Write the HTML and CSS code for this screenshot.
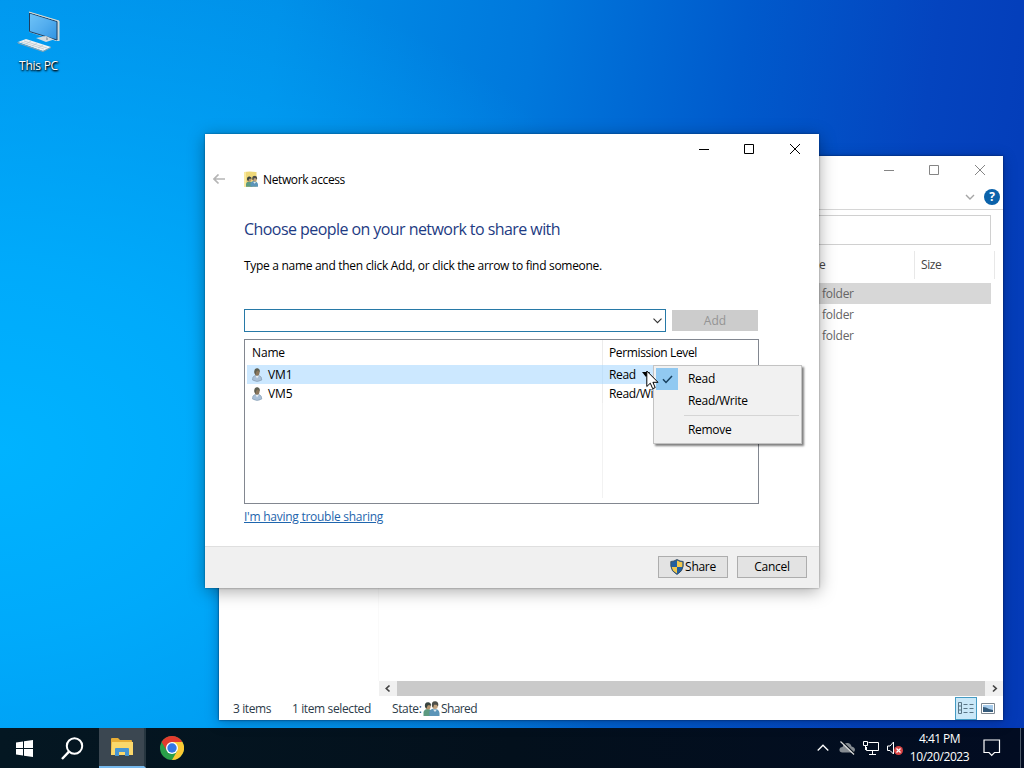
FILE: index.html
```html
<!DOCTYPE html>
<html lang="en">
<head>
<meta charset="utf-8">
<title>Network access</title>
<link rel="stylesheet" href="styles.css">
</head>
<body>
<svg width="0" height="0" class="defs">
  <symbol id="people" viewBox="0 0 16 16">
    <path d="M0 15V11Q1 8 4 8Q8 8 8.500 12V15Z" fill="#5c9a80"/>
    <path d="M6 15V10Q8 7 11 7.500Q15.500 8 16 12V15Z" fill="#5b94b8"/>
    <ellipse cx="4.500" cy="5.200" rx="2.700" ry="3.300" fill="#b5946f"/>
    <path d="M1.500 6Q.6 1 5 1.300Q8 2 7.300 5L5.500 4L4 4.700L3 7.500Z" fill="#384440"/>
    <ellipse cx="11.500" cy="4.500" rx="2.900" ry="3.500" fill="#c2a37e"/>
    <path d="M8.500 5.500Q7.500 0 12 .3Q15.800 1 14.500 5.500L13 3.800L10.500 3.800L9.800 6.500Z" fill="#4c4e48"/>
    <path d="M9.500 8.500L11.500 11L13.500 8.500" fill="#d9e7ee"/>
  </symbol>
  <symbol id="person" viewBox="0 0 12 14">
    <path d="M1.500 12Q1 8.500 4 7.500H8Q11 8.500 10.800 12Q6 15 1.500 12Z" fill="#a9c0d8" stroke="#8299ae" stroke-width=".6"/>
    <path d="M4.500 7.500L6 10.500L8 7.500Z" fill="#e7eff5"/>
    <ellipse cx="6" cy="4.200" rx="2.500" ry="3.500" fill="#8a765c"/>
    <path d="M3.300 4Q3 .2 6.500 .3Q9.300 .6 8.700 4.500L7.300 2.500Q5 2 4.800 6.500Q3.500 6 3.300 4Z" fill="#5e6053"/>
  </symbol>
</svg>
<div class="desktop">
  <div class="shortcut">
    <svg width="44" height="44" viewBox="0 0 44 44">
      <defs><linearGradient id="scr" x1="0" y1="0" x2="1" y2="1"><stop offset="0" stop-color="#70c4f8"/><stop offset=".5" stop-color="#54aeef"/><stop offset="1" stop-color="#2f93e2"/></linearGradient></defs>
      <path d="M12 2L42 11V31L39 31L12 22Z" fill="#bcd8e8"/>
      <path d="M12.500 3L40 11.500V30L12.500 21.500Z" fill="url(#scr)" stroke="#1c3f62"/>
      <path d="M12 2L42 11V31" fill="none" stroke="#e0dccf"/>
      <path d="M19 28L29 26L37 29.500L29 32Z" fill="#d5dce0"/><path d="M29 27V30H31V28" fill="#a2adb5"/>
      <path d="M1 32L9 29L34 37L26 41Z" fill="#eef2f3"/><path d="M1 32V33L26 41.500L34 37.500" fill="none" stroke="#8ba3b0"/>
      <path d="M4 32L27 39M7 31L30 38M9 34L14 31M15 36L20 33M21 38L26 35" stroke="#b7c4cc" stroke-width=".7"/>
    </svg>
    <span>This PC</span>
  </div>

  <section class="window explorer">
    <div class="explorer-title">
      <svg width="102" height="12" viewBox="0 0 102 12" fill="none" stroke="#858585"><path d="M0 6.500H10M45.500 1.500H54.500V10.500H45.500ZM91 1L101 11M101 1L91 11"/></svg>
    </div>
    <div class="ribbon">
      <svg width="10" height="6" viewBox="0 0 10 6" fill="none" stroke="#a5a5a5" stroke-width="1.400"><path d="M1 1L5 5L9 1"/></svg>
      <b class="help">?</b>
    </div>
    <div class="address"><div class="address-box"></div></div>
    <div class="columns"><span class="col-type">e</span><span class="col-size">Size</span></div>
    <div class="browser">
      <div class="nav"></div>
      <div class="files">
        <div class="file selected">folder</div>
        <div class="file">folder</div>
        <div class="file">folder</div>
      </div>
    </div>
    <div class="scrollbar">
      <svg width="16" height="15" viewBox="0 0 16 15" fill="none" stroke="#444" stroke-width="1.700"><path d="M10.500 4.500L7.300 7.500L10.500 10.500"/></svg>
      <i></i>
      <svg width="18" height="15" viewBox="0 0 18 15" fill="none" stroke="#444" stroke-width="1.700"><path d="M8 4.500L11.200 7.500L8 10.500"/></svg>
    </div>
    <div class="status">
      <span class="s-items">3 items</span><span class="s-selected">1 item selected</span><span class="s-state">State:</span>
      <svg width="17" height="16"><use href="#people"/></svg><span class="s-shared">Shared</span>
      <div class="views">
        <div class="view-on"><svg width="16" height="14" viewBox="0 0 16 14" fill="none" stroke="#5a7686"><path d="M.5 1.500H3.500V12.500H.5ZM.5 5H4M.5 9H4"/><path d="M5.500 3.500H16M5.500 7.500H16M5.500 11.500H16" stroke-dasharray="4 2"/></svg></div>
        <svg width="14" height="11" viewBox="0 0 14 11"><path d="M.5 .5H13.500V10.500H.5Z" fill="#fff" stroke="#7d8790"/><path d="M2 2H12V9H2Z" fill="#a7ccec"/><path d="M2 4Q5 4 8 6L12 7V9H2Z" fill="#355b7b"/></svg>
      </div>
    </div>
  </section>

  <section class="window dialog">
    <div class="dialog-title">
      <svg width="102" height="12" viewBox="0 0 102 12" fill="none" stroke="#000"><path d="M0 6.500H10M45.500 1.500H54.500V10.500H45.500ZM91 1L101 11M101 1L91 11"/></svg>
    </div>
    <div class="dialog-head">
      <svg class="back" width="13" height="12" viewBox="0 0 13 12" fill="none" stroke="#b5b5b5" stroke-width="1.700"><path d="M12 5H1M5.500 .5L1 5L5.500 9.500"/></svg>
      <svg width="15" height="17" viewBox="0 0 15 17"><path d="M0 1Q5 0 12.500 1V16H0Z" fill="#efd878"/><path d="M0 1H2V16H0Z" fill="#f9e9a0"/><use href="#people" x="1.500" y="4.500" width="13" height="12"/></svg>
      <span class="caption">Network access</span>
    </div>
    <div class="dialog-body">
      <h1>Choose people on your network to share with</h1>
      <p>Type a name and then click Add, or click the arrow to find someone.</p>
      <div class="add-row">
        <div class="combo"><svg width="9" height="6" viewBox="0 0 9 6" fill="none" stroke="#333" stroke-width="1.100"><path d="M.5 .7L4.500 4.700L8.500 .7"/></svg></div>
        <div class="add">Add</div>
      </div>
      <div class="list">
        <div class="list-row head"><span class="name">Name</span><span class="perm p-head">Permission Level</span></div>
        <div class="list-row active"><span class="name"><svg width="12" height="14"><use href="#person"/></svg><span>VM1</span></span><span class="perm">Read<svg class="drop" width="8" height="5" viewBox="0 0 8 5"><path d="M0 0H8L4 5Z"/></svg></span></div>
        <div class="list-row"><span class="name"><svg width="12" height="14"><use href="#person"/></svg><span>VM5</span></span><span class="perm p-rw">Read/Wi</span></div>
        <div class="list-rest"></div>
      </div>
      <a class="link">I'm having trouble sharing</a>
    </div>
    <div class="dialog-foot">
      <div class="button"><svg width="14" height="16" viewBox="0 0 14 16"><path d="M7 .5Q4 2.500 .8 2.500V7Q1 12 7 15.500Q13 12 13.200 7V2.500Q10 2.500 7 .5Z" fill="#235f9f"/><path d="M7 1.500Q10 3.300 12.500 3.300V8H7ZM7 8V14.500Q2.300 12 1.600 8Z" fill="#f2c84c"/><path d="M7 .5Q4 2.500 .8 2.500V7Q1 12 7 15.500Q13 12 13.200 7V2.500Q10 2.500 7 .5Z" fill="none" stroke="#394e60" stroke-width=".9"/></svg><span class="t-share">Share</span></div>
      <div class="button"><span class="t-cancel">Cancel</span></div>
    </div>
  </section>

  <div class="menu">
    <div class="item"><div class="check"><svg width="11" height="9" viewBox="0 0 11 9" fill="none" stroke="#17405f" stroke-width="1.500"><path d="M1 4.300L4 7.500L10 1"/></svg></div><span>Read</span></div>
    <div class="item"><div class="gap"></div><span class="m-rw">Read/Write</span></div>
    <div class="rule"></div>
    <div class="item"><div class="gap"></div><span class="m-remove">Remove</span></div>
  </div>
  <svg class="pointer" width="13" height="20" viewBox="0 0 13 20"><path d="M.8 1V16.500L4.300 13.200L6.700 18.700L9.200 17.600L6.900 12.300H12Z" fill="#fff" stroke="#000"/></svg>

  <footer class="taskbar">
    <div class="task start"><svg width="17" height="17" viewBox="0 0 17 17" fill="#fff"><path d="M0 2.400L7 1.400V8H0ZM8 1.200L17 0V8H8ZM0 9H7V15.600L0 14.600ZM8 9H17V17L8 15.800Z"/></svg></div>
    <div class="task search"><svg width="23" height="23" viewBox="0 0 23 23" fill="none" stroke="#fff" stroke-width="2"><circle cx="13.500" cy="9" r="7.700"/><path d="M8 14.700L1 22" stroke-width="2.400"/></svg></div>
    <div class="task folder"><svg width="22" height="19" viewBox="0 0 22 19"><path d="M0 1Q0 0 1 0H7L9 2H20Q21 2 21 3V17H0Z" fill="#e9ae35"/><path d="M1 4H22V17H0Z" fill="#fbd86b"/><path d="M4 18V11Q4 10 5 10H17Q18 10 18 11V18H14V14H8V18Z" fill="#4795d3"/></svg></div>
    <div class="task chrome"><svg width="24" height="24" viewBox="0 0 24 24"><circle cx="12" cy="12" r="12" fill="#2a9f49"/><path d="M1.600 6A12 12 0 0 1 22.400 6H12L7 15Z" fill="#e23b2e"/><path d="M12 6H22.400A12 12 0 0 1 12 24L17.200 15Z" fill="#fcc934"/><circle cx="12" cy="12" r="6" fill="#fff"/><circle cx="12" cy="12" r="4.700" fill="#3477e5"/></svg></div>
    <div class="tray">
      <svg width="86" height="16" viewBox="0 0 86 16" fill="none">
        <path d="M.7 10.500L6 5.200L11.300 10.500" stroke="#fff" stroke-width="1.300"/>
        <path d="M25 12.500Q22 12 22.500 9Q23 7 25.500 7Q27 2.500 31 3Q34 3.500 34.500 6.500Q38 7 38 10Q37.500 12.500 35 12.500Z" fill="#858b91"/>
        <path d="M24.500 1L38 14" stroke="#07101b" stroke-width="1.500"/><path d="M23.500 1.500L37 14.500" stroke="#ddd" stroke-width="1.200"/>
        <path d="M51.500 2.500H61.500V10.500H49.500V7M55.500 11V14M52 14.500H59M46.500 1.500H50.500V5.500H46.500ZM48.500 6V10" stroke="#fff"/>
        <path d="M70.500 6H73L76.500 2V14L73 10.500H70.500Z" stroke="#fff"/><circle cx="81.500" cy="10.500" r="4.500" fill="#d94444"/><path d="M79.500 8.500L83.500 12.500M83.500 8.500L79.500 12.500" stroke="#fff" stroke-width="1.200"/>
      </svg>
      <div class="clock"><span class="time">4:41 PM</span><span class="date">10/20/2023</span></div>
      <svg width="18" height="18" viewBox="0 0 18 18" fill="none" stroke="#fff" stroke-width="1.200"><path d="M1 1H16.500V13.500H11.500L8.700 16.300L6 13.500H1Z"/></svg>
      <div class="peek"></div>
    </div>
  </footer>
</div>
</body>
</html>
```
FILE: styles.css
```css
* { box-sizing: border-box; }
body { margin: 0; font: 12px/16px "Open Sans", "Noto Sans", sans-serif; color: #000; }
span, h1, p, a { white-space: nowrap; }
svg { display: block; flex: none; }
.defs { position: absolute; }
.desktop {
  position: relative; width: 1024px; height: 768px; overflow: hidden;
  display: flex; flex-direction: column; justify-content: space-between;
  background:
    radial-gradient(ellipse 700px 520px at 0 450px, #00b3ff 0%, rgba(0, 176, 255, .8) 35%, rgba(0, 160, 248, 0) 100%),
    linear-gradient(97deg, #0094ec 0%, #008fe8 25%, #0078dc 48%, #005acc 67%, #0444bf 84%, #0439b6 100%);
}
.shortcut { width: 77px; padding-top: 10px; display: flex; flex-direction: column; align-items: center; gap: 4px; color: #fff; letter-spacing: -.25px; text-shadow: 1px 1px 2px #000, 0 1px 2px #000; }

.window { position: absolute; display: flex; flex-direction: column; background: #fff; }
.explorer { left: 219px; top: 156px; width: 784px; height: 564px; color: #444; box-shadow: 0 0 2px rgba(0, 20, 60, .8), 0 2px 12px rgba(0, 20, 60, .35); }
.explorer-title { height: 28px; display: flex; justify-content: flex-end; padding: 8px 17px 0 0; }
.ribbon { height: 26px; display: flex; justify-content: flex-end; align-items: center; gap: 9px; padding-right: 3px; border-bottom: 1px solid #d6d6d6; }
.help { width: 16px; height: 16px; border-radius: 50%; background: #0b62aa; color: #fff; text-align: center; font-size: 12px; line-height: 16px; }
.address { height: 40px; padding: 5px 12px 5px 0; }
.address-box { height: 30px; border: 1px solid #d0d0d0; }
.columns { height: 33px; display: flex; padding: 1px 8px 4px 600px; line-height: 28px; }
.col-type { flex: 1; }
.col-size { width: 81px; padding-left: 6px; border: 1px solid #e8e8e8; border-width: 0 1px; letter-spacing: -.4px; }
.browser { flex: 1; display: flex; }
.nav { width: 160px; border-right: 1px solid #fafafa; }
.files { flex: 1; padding-right: 12px; }
.file { height: 21px; padding-left: 443px; line-height: 22px; color: #666; letter-spacing: -.25px; }
.selected { background: #d7d7d7; }
.scrollbar { height: 15px; display: flex; margin-left: 160px; background: #f0f0f0; }
.scrollbar i { flex: 1; margin-left: 2px; background: #cacaca; }
.status { height: 24px; display: flex; align-items: center; padding: 2px 0 0 14px; color: #2c3b49; letter-spacing: -.38px; }
.s-items { width: 59px; }
.s-selected { width: 100px; }
.s-state { width: 31px; }
.s-shared { margin-left: 1px; letter-spacing: -.6px; }
.views { margin-left: auto; display: flex; align-items: center; gap: 4px; padding-right: 8px; margin-top: -2px; }
.view-on { width: 22px; height: 23px; display: flex; align-items: center; justify-content: center; background: #cae8f8; border: 1px solid #459bc3; }

.dialog { left: 205px; top: 134px; width: 614px; height: 454px; box-shadow: 0 0 2px rgba(0, 0, 0, .4), 0 3px 16px rgba(0, 0, 0, .35); }
.dialog-title { height: 30px; display: flex; justify-content: flex-end; padding: 9px 18px 0 0; }
.dialog-head { height: 31px; display: flex; align-items: center; padding-left: 8px; }
.back { margin-right: 18px; }
.caption { margin-left: 4px; letter-spacing: -.38px; }
.dialog-body { flex: 1; padding: 22px 60px 0 39px; }
h1 { margin: 0; font-size: 16px; line-height: 25px; font-weight: 400; color: #1e3b83; letter-spacing: -.56px; }
p { margin: 16px 0 0; line-height: 16px; letter-spacing: -.3px; }
.add-row { display: flex; justify-content: space-between; align-items: center; margin: 35px 1px 0 0; }
.combo { width: 422px; height: 23px; display: flex; justify-content: flex-end; align-items: center; padding-right: 3px; border: 1px solid #2779a7; }
.add { width: 86px; height: 21px; background: #ccc; color: #949494; text-align: center; line-height: 21px; }
.list { width: 515px; height: 165px; margin-top: 7px; border: 1px solid #828790; display: flex; flex-direction: column; }
.list-row { height: 19px; display: flex; padding-left: 2px; }
.head { height: 25px; }
.active { background: #cce8ff; background-clip: content-box; }
.name { width: 356px; border-right: 1px solid #ececec; display: flex; align-items: center; gap: 5px; padding-left: 4px; letter-spacing: -.15px; }
.head .name { padding-left: 5px; }
.active .name { border-color: #c2e0f8; }
.perm { flex: 1; padding-left: 6px; line-height: 19px; display: flex; align-items: center; letter-spacing: -.37px; }
.drop { margin-left: 6px; }
.list-rest { flex: 1; width: 358px; margin-bottom: 5px; border-right: 1px solid #f2f2f2; }
.link { display: block; margin-top: 5px; color: #1e65ad; text-decoration: underline; letter-spacing: -.26px; }
.dialog-foot { height: 42px; display: flex; justify-content: flex-end; gap: 9px; padding: 9px 12px 0 0; background: #f0f0f0; border-top: 1px solid #dfdfdf; }
.button { width: 70px; height: 22px; display: flex; align-items: center; justify-content: center; gap: 1px; background: #e3e3e3; border: 1px solid #adadad; letter-spacing: -.3px; }

.menu { position: absolute; left: 653px; top: 365px; width: 149px; height: 79px; padding: 2px; background: #f1f1f1; border: 1px solid #c3c3c3; box-shadow: 2px 2px 2px rgba(0, 0, 0, .5); }
.item { height: 22px; display: flex; align-items: center; letter-spacing: -.3px; }
.check { width: 22px; height: 22px; margin-right: 10px; display: flex; align-items: center; justify-content: center; background: #91c9f1; }
.gap { width: 32px; }
.rule { height: 1px; margin: 3px 0 3px 28px; background: #d5d5d5; }
.pointer { position: absolute; left: 646px; top: 370px; }

.taskbar { height: 40px; display: flex; background: linear-gradient(90deg, #041722, #03101c 50%, #020c22); color: #fff; }
.task { display: flex; align-items: center; justify-content: center; }
.start { width: 48px; }
.search { width: 51px; padding-right: 3px; }
.folder { width: 47px; background: #3b4751; border-bottom: 2px solid #76b9ed; border-right: 2px solid #263640; }
.chrome { width: 52px; }
.tray { flex: 1; display: flex; align-items: center; justify-content: flex-end; }
.clock { width: 73px; margin-right: 7px; display: flex; flex-direction: column; align-items: center; line-height: 18px; letter-spacing: -.55px; }
.date { letter-spacing: -.42px; }
.peek { width: 1px; height: 40px; margin: 0 3px 0 19px; background: #4d5968; }
```
